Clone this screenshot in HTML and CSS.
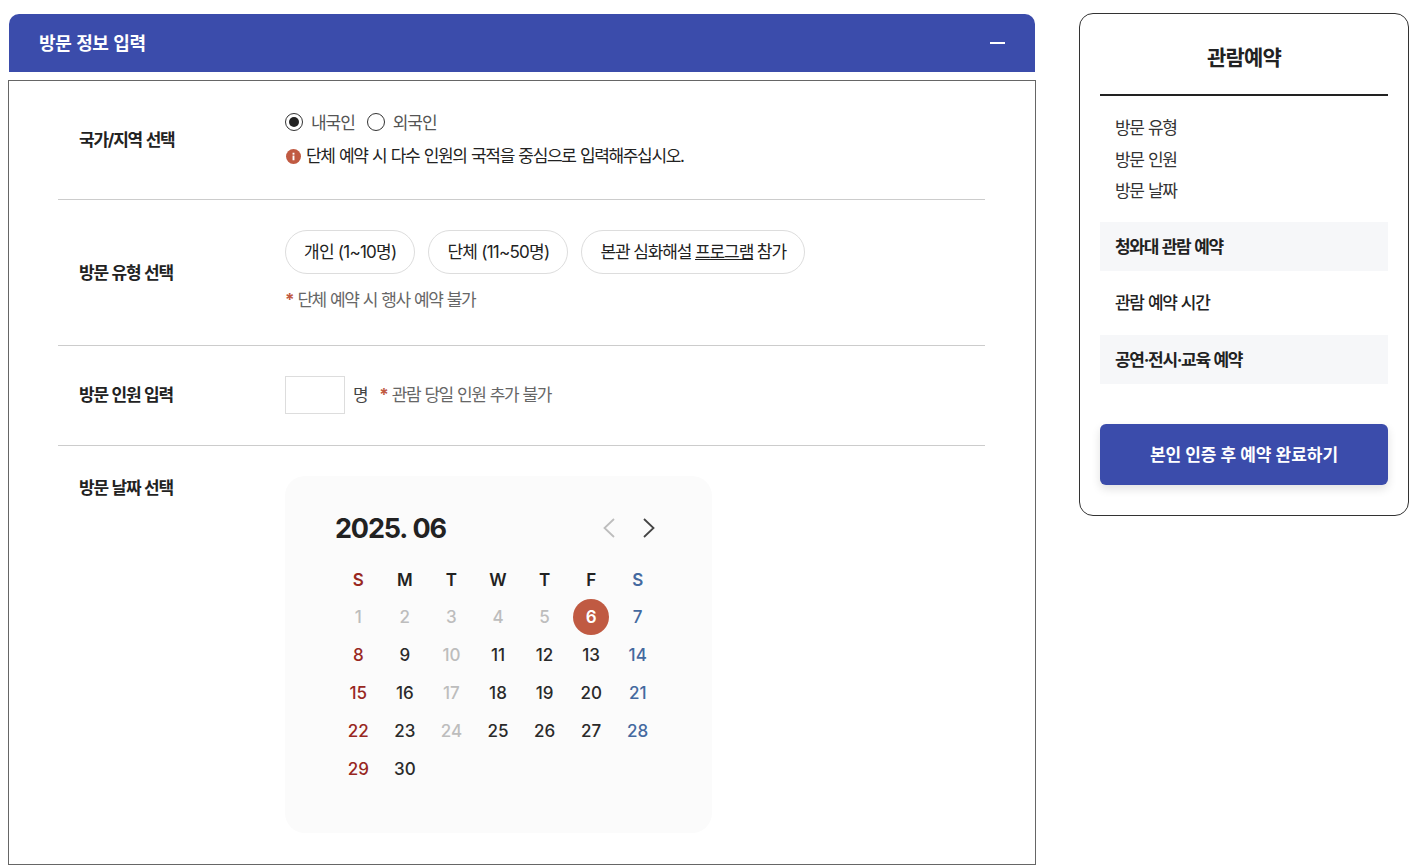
FILE: index.html
```html
<!DOCTYPE html>
<html lang="ko">
<head>
    <meta charset="UTF-8">
    <meta name="viewport" content="width=device-width, initial-scale=1.0">
    <title>방문 정보 입력</title>
    <link rel="stylesheet" href="styles.css">
</head>
<body>
    <!-- Main form -->
    <div class="main">
        <div class="panel-head">
            <span class="panel-title">방문 정보 입력</span>
            <span class="collapse"></span>
        </div>

        <div class="panel">
            <div class="row row-country">
                <div class="label">국가/지역 선택</div>
                <div class="value">
                    <div class="radios">
                        <span class="radio on"></span><span class="radio-text">내국인</span>
                        <span class="radio"></span><span class="radio-text">외국인</span>
                    </div>
                    <div class="notice">
                        <svg class="info" viewBox="0 0 16 16" width="15" height="15">
                            <circle cx="8" cy="8" r="8" fill="#c05a42"/>
                            <rect x="7" y="7" width="2" height="5" fill="#fff"/>
                            <rect x="7" y="4" width="2" height="2" fill="#fff"/>
                        </svg>
                        <span>단체 예약 시 다수 인원의 국적을 중심으로 입력해주십시오.</span>
                    </div>
                </div>
            </div>

            <div class="row row-type">
                <div class="label">방문 유형 선택</div>
                <div class="value">
                    <div class="chips">
                        <div class="chip chip-num">개인 (1~10명)</div>
                        <div class="chip chip-num">단체 (11~50명)</div>
                        <div class="chip">본관 심화해설 <u>프로그램</u> 참가</div>
                    </div>
                    <div class="hint"><b>*</b> 단체 예약 시 행사 예약 불가</div>
                </div>
            </div>

            <div class="row row-count">
                <div class="label">방문 인원 입력</div>
                <div class="value count">
                    <input class="count-input" type="text">
                    <span class="unit">명</span>
                    <span class="hint"><b>*</b> 관람 당일 인원 추가 불가</span>
                </div>
            </div>

            <div class="row row-date">
                <div class="label">방문 날짜 선택</div>
                <div class="value">
                    <div class="calendar">
                        <div class="cal-head">
                            <div class="cal-title">2025. 06</div>
                            <div class="cal-nav">
                                <svg viewBox="0 0 14 20" width="14" height="20"><path d="M12 1 2.5 10l9.5 9" fill="none" stroke="#bdbdbd" stroke-width="1.8"/></svg>
                                <svg viewBox="0 0 14 20" width="14" height="20"><path d="M2 1l9.5 9L2 19" fill="none" stroke="#444" stroke-width="1.8"/></svg>
                            </div>
                        </div>
                        <div class="cal-grid">
                            <div class="dow sun">S</div><div class="dow">M</div><div class="dow">T</div><div class="dow">W</div><div class="dow">T</div><div class="dow">F</div><div class="dow sat">S</div>
                            <div class="off">1</div><div class="off">2</div><div class="off">3</div><div class="off">4</div><div class="off">5</div><div class="today"><span>6</span></div><div class="sat">7</div>
                            <div class="sun">8</div><div>9</div><div class="off">10</div><div>11</div><div>12</div><div>13</div><div class="sat">14</div>
                            <div class="sun">15</div><div>16</div><div class="off">17</div><div>18</div><div>19</div><div>20</div><div class="sat">21</div>
                            <div class="sun">22</div><div>23</div><div class="off">24</div><div>25</div><div>26</div><div>27</div><div class="sat">28</div>
                            <div class="sun">29</div><div>30</div>
                        </div>
                    </div>
                </div>
            </div>
        </div>
    </div>

    <!-- Right summary -->
    <div class="summary">
        <h2>관람예약</h2>
        <ul class="summary-list">
            <li>방문 유형</li>
            <li>방문 인원</li>
            <li>방문 날짜</li>
        </ul>
        <div class="summary-band">청와대 관람 예약</div>
        <div class="summary-time">관람 예약 시간</div>
        <div class="summary-band">공연·전시·교육 예약</div>
        <button class="submit">본인 인증 후 예약 완료하기</button>
    </div>
</body>
</html>
```

FILE: styles.css
```css
* { margin: 0; padding: 0; box-sizing: border-box; }
html, body { background: #fff; }
body { display: flex; align-items: flex-start; height: 866px; overflow: hidden; padding: 13px 0 0 8px; font-family: Inter, "Noto Sans CJK KR", sans-serif; color: #222; letter-spacing: -1.35px; word-spacing: 1px; }

/* Main form */
.main { width: 1028px; }
.panel-head { height: 58px; margin: 1px 1px 0; padding: 0 30px; display: flex; align-items: center; justify-content: space-between; background: #3b4cab; color: #fff; font-size: 18px; font-weight: 700; border-radius: 10px 10px 0 0; letter-spacing: -0.4px; }
.panel-title { padding-bottom: 2px; }
.collapse { width: 15px; height: 2px; background: #fff; }
.panel { height: 785px; margin-top: 8px; border: 1px solid #666; padding: 0 50px 0 49px; }

.row { display: flex; align-items: center; border-bottom: 1px solid #ccc; padding-left: 21px; }
.row-country { height: 119px; }
.row-type { height: 146px; }
.row-count { height: 100px; }
.row-date { border-bottom: 0; align-items: flex-start; padding-top: 30px; }
.label { width: 206px; padding-bottom: 3px; font-size: 17px; font-weight: 700; color: #222; letter-spacing: -1.25px; }
.row-count .label { padding-bottom: 5px; }
.row-date .label { margin-top: -2px; }
.row-country .value { align-self: flex-start; padding-top: 32px; }
.row-type .value { align-self: flex-start; padding-top: 30px; }

/* Country */
.radios { display: flex; align-items: center; height: 18px; font-size: 17px; color: #555; letter-spacing: -1.05px; }
.radio { width: 18px; height: 18px; border: 1px solid #333; border-radius: 50%; display: flex; align-items: center; justify-content: center; }
.radio.on::after { content: ""; width: 10px; height: 10px; border-radius: 50%; background: #222; }
.radio-text { margin: 0 12px 0 8px; padding-bottom: 2px; }
.notice { display: flex; align-items: flex-start; gap: 5px; margin-top: 15px; font-size: 17px; line-height: 20px; color: #222; }
.info { flex: none; margin: 3px 0 0 1px; }

/* Type */
.chips { display: flex; gap: 13px; }
.chip { height: 44px; padding: 0 18px 3px; display: flex; align-items: center; border: 1px solid #ddd; border-radius: 22px; font-size: 17px; font-kerning: none; color: #222; background: #fff; white-space: pre; letter-spacing: -1.1px; word-spacing: 0; }
.chip-num { letter-spacing: -0.75px; }
.hint { color: #666; font-size: 17px; line-height: 20px; letter-spacing: -1.45px; }
.hint b { color: #c05a42; font-weight: 700; }
.row-type .hint { margin-top: 16px; }

/* Count */
.count { display: flex; align-items: center; }
.count-input { width: 60px; height: 38px; margin-bottom: 1px; border: 1px solid #ddd; background: #fff; }
.unit { margin: 0 12px 0 8px; padding-bottom: 1px; font-size: 17px; line-height: 20px; color: #444; }
.count .hint { padding-bottom: 1px; }

/* Calendar */
.calendar { width: 427px; height: 357px; padding: 30px 51px 0 50px; border-radius: 20px; background: #fbfbfb; letter-spacing: 0; word-spacing: 0; }
.cal-head { display: flex; align-items: center; justify-content: space-between; height: 44px; padding-right: 5px; }
.cal-title { font-size: 27px; font-weight: 700; color: #222; letter-spacing: -1.15px; word-spacing: 1px; }
.cal-nav { display: flex; gap: 26px; }
.cal-grid { display: grid; grid-template-columns: repeat(7, 1fr); grid-template-rows: 37px; grid-auto-rows: 38px; margin-top: 11px; font-size: 17px; font-weight: 500; color: #2a2a2a; text-align: center; }
.cal-grid > div { display: flex; align-items: center; justify-content: center; }
.dow { font-weight: 600; color: #222; }
.cal-grid .sun { color: #98281f; }
.cal-grid .sat { color: #44699f; }
.off { color: #bdbdbd; }
.today span { width: 36px; height: 36px; border-radius: 50%; background: #c05a42; color: #fff; font-weight: 600; display: flex; align-items: center; justify-content: center; }

/* Summary */
.summary { width: 330px; height: 503px; margin-left: 43px; padding: 0 20px; border: 1px solid #333; border-radius: 14px; }
.summary h2 { height: 82px; padding-top: 24px; text-align: center; font-size: 21px; font-weight: 700; line-height: 40px; color: #222; border-bottom: 2px solid #222; letter-spacing: -0.8px; }
.summary-list { list-style: none; padding: 17px 15px 0; height: 126px; font-size: 17px; line-height: 31.5px; color: #333; letter-spacing: -1.35px; }
.summary-band { height: 49px; padding: 0 0 2px 15px; display: flex; align-items: center; background: #f6f7f9; font-size: 17px; font-weight: 700; letter-spacing: -1.3px; }
.summary-time { height: 64px; padding: 0 0 4px 15px; display: flex; align-items: center; font-size: 17px; font-weight: 500; letter-spacing: -1.3px; }
.submit { display: block; width: 100%; height: 61px; margin-top: 40px; padding-bottom: 2px; border: 0; border-radius: 6px; background: #3b4cab; color: #fff; font-family: inherit; font-size: 17px; font-weight: 700; letter-spacing: 0; box-shadow: 0 4px 10px rgba(0, 0, 0, 0.12); }
```
